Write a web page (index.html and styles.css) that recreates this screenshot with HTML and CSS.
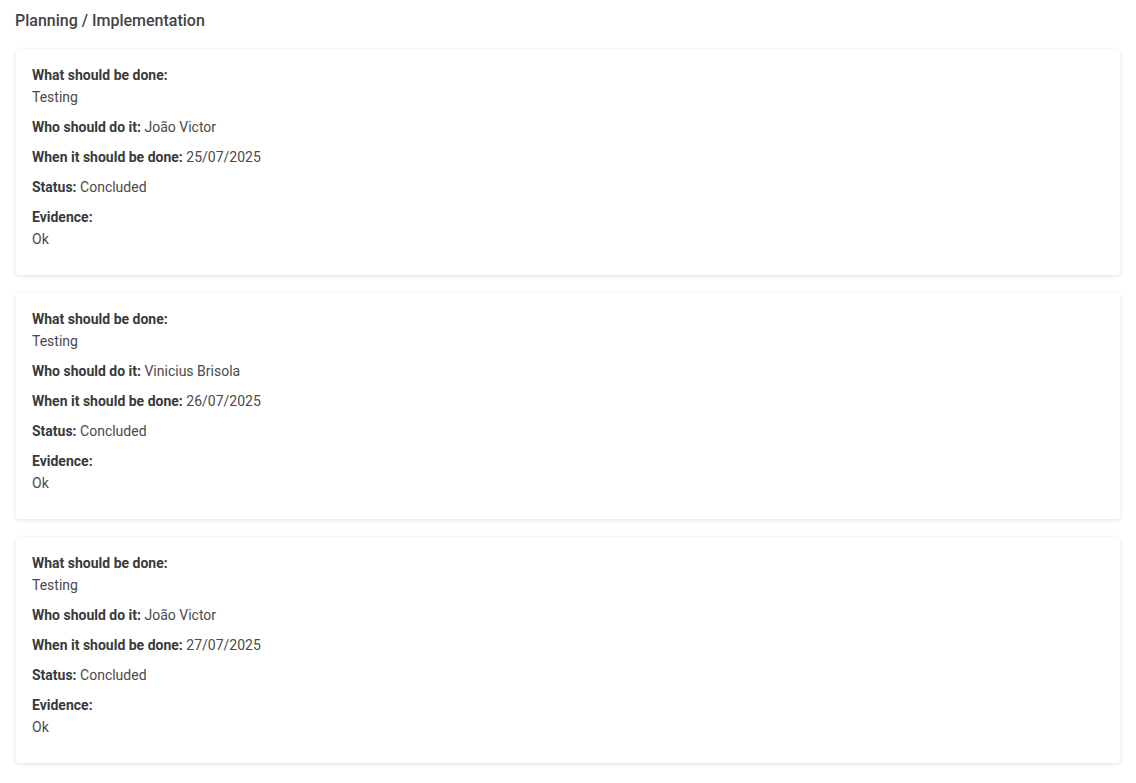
FILE: index.html
```html
<!DOCTYPE html>
<html lang="en">
<head>
  <meta charset="UTF-8">
  <title>Planning / Implementation</title>
  <link rel="stylesheet" href="styles.css">
</head>
<body>
<div class="page">
  <div class="section-title">Planning / Implementation</div>

  <div class="plan-list">
    <div class="plan-card">
      <div class="field">
        <span class="label">What should be done:</span>
        <div class="value">Testing</div>
      </div>
      <div class="field"><span class="label">Who should do it:</span> <span class="value">João Victor</span></div>
      <div class="field"><span class="label">When it should be done:</span> <span class="value">25/07/2025</span></div>
      <div class="field"><span class="label">Status:</span> <span class="value">Concluded</span></div>
      <div class="field">
        <span class="label">Evidence:</span>
        <div class="value">Ok</div>
      </div>
    </div>

    <div class="plan-card">
      <div class="field">
        <span class="label">What should be done:</span>
        <div class="value">Testing</div>
      </div>
      <div class="field"><span class="label">Who should do it:</span> <span class="value">Vinicius Brisola</span></div>
      <div class="field"><span class="label">When it should be done:</span> <span class="value">26/07/2025</span></div>
      <div class="field"><span class="label">Status:</span> <span class="value">Concluded</span></div>
      <div class="field">
        <span class="label">Evidence:</span>
        <div class="value">Ok</div>
      </div>
    </div>

    <div class="plan-card">
      <div class="field">
        <span class="label">What should be done:</span>
        <div class="value">Testing</div>
      </div>
      <div class="field"><span class="label">Who should do it:</span> <span class="value">João Victor</span></div>
      <div class="field"><span class="label">When it should be done:</span> <span class="value">27/07/2025</span></div>
      <div class="field"><span class="label">Status:</span> <span class="value">Concluded</span></div>
      <div class="field">
        <span class="label">Evidence:</span>
        <div class="value">Ok</div>
      </div>
    </div>
  </div>
</div>
</body>
</html>
```

FILE: styles.css
```css
body {
  font-family: 'Roboto', sans-serif;
  background-color: #ffffff;
  color: #444;
  margin: 0;
  padding: 0;
}

.page {
  padding: 9px 16px 16px 15px;
}

.section-title {
  font-size: 16px;
  font-weight: 500;
  line-height: 24px;
  color: #444;
  margin-bottom: 16px;
}

.plan-list {
  display: flex;
  flex-direction: column;
  gap: 18px;
  margin-left: 1px;
}

.plan-card {
  background-color: #fff;
  border-radius: 4px;
  box-shadow: 0 1px 4px rgba(0, 0, 0, 0.12);
  padding: 15px 16px 16px;
  height: 226px;
  box-sizing: border-box;
}

.field {
  font-size: 14px;
  line-height: 22px;
  margin-bottom: 8px;
}

.label {
  font-weight: 700;
  color: #3a3a3a;
}

.value {
  color: #4a4a4a;
}
```
